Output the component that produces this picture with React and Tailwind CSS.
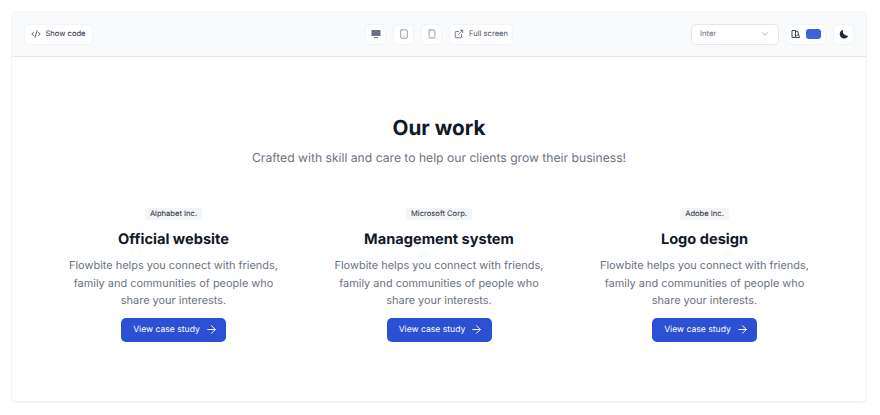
import React from "react";
import { ArrowRight, ChevronDown, CodeXml, ExternalLink, Smartphone, Tablet } from "lucide-react";

const projects = [
  { company: "Alphabet Inc.", title: "Official website" },
  { company: "Microsoft Corp.", title: "Management system" },
  { company: "Adobe Inc.", title: "Logo design" },
];

function IconButton({ children }) {
  return (
    <div className="flex h-[21px] w-[21px] items-center justify-center rounded-[5px] border border-gray-100 bg-white text-gray-500">
      {children}
    </div>
  );
}

function ProjectCard({ company, title }) {
  return (
    <div className="flex w-[235px] flex-col items-center text-center">
      <span className="rounded-[3px] bg-gray-100 px-[5px] py-[1px] text-[7.6px] leading-[10px] font-normal text-gray-800">
        {company}
      </span>
      <h3 className="mt-[9px] text-[14.6px] leading-[20px] font-bold text-[#111827]">{title}</h3>
      <p className="mt-[8px] w-[212px] text-[10.95px] leading-[17.5px] text-[#6b7280]">
        Flowbite helps you connect with friends, family and communities of people who share your interests.
      </p>
      <a className="mt-[8px] flex h-[24px] w-[105px] items-center justify-center gap-[5px] rounded-[5px] bg-[#2b50d4] pl-[4px] text-[8.6px] font-normal text-white">
        <span className="pt-[2px]">View case study</span>
        <ArrowRight size={13} strokeWidth={1.8} />
      </a>
    </div>
  );
}

export default function App() {
  return (
    <div className="h-[415px] bg-white pt-[11px] pl-[11px] font-['Inter',sans-serif] [text-rendering:geometricPrecision]">
      <div className="h-[391px] w-[856px] overflow-hidden rounded-[5px] border border-gray-100 shadow-[0_1px_1px_rgba(0,0,0,0.05)]">
        {/* Toolbar */}
        <div className="flex h-[45px] items-center justify-between border-b border-gray-200 bg-gray-50 px-[12px]">
          <div className="flex h-[21px] w-[69px] items-center justify-center gap-[4px] rounded-[5px] border border-gray-100 bg-white text-[7.6px] font-normal text-gray-800">
            <CodeXml size={10} strokeWidth={1.8} />
            Show code
          </div>

          <div className="ml-[94px] flex items-center gap-[7px]">
            <IconButton>
              <svg width="10" height="10" viewBox="0 0 10 10" fill="currentColor">
                <path d="M1 1h8a.5.5 0 0 1 .5.500v5a.5.5 0 0 1-.5.5H1a.5.5 0 0 1-.5-.5v-5A.5.5 0 0 1 1 1z" />
                <path d="M3 8h4v1H3z" />
              </svg>
            </IconButton>
            <IconButton><Tablet size={10} strokeWidth={1.6} /></IconButton>
            <IconButton><Smartphone size={10} strokeWidth={1.6} /></IconButton>
            <div className="flex h-[21px] w-[64px] items-center justify-center gap-[5px] rounded-[5px] border border-gray-100 bg-white text-[7.6px] font-normal text-gray-600">
              <ExternalLink size={10} strokeWidth={1.8} />
              Full screen
            </div>
          </div>

          <div className="flex items-center gap-[7px]">
            <div className="flex h-[21px] w-[88px] items-center justify-between rounded-[5px] border border-gray-200 bg-white px-[8px] text-[7.6px] text-gray-500">
              Inter
              <ChevronDown size={10} strokeWidth={1.4} />
            </div>
            <div className="flex h-[21px] w-[40px] items-center justify-center gap-[5px] rounded-[5px] border border-gray-100 bg-white text-gray-700">
              <svg width="10" height="10" viewBox="0 0 10 10" fill="none" stroke="currentColor" strokeWidth="1">
                <path d="M1 1.500h3.500v7H1z" />
                <path d="M4.500 2.500 6.500 2 8.500 8.500H4.500" />
                <path d="M5 7.500 7.500 5" />
              </svg>
              <span className="h-[10px] w-[15px] rounded-[3px] bg-[#3f62d8]" />
            </div>
            <IconButton>
              <svg width="10" height="10" viewBox="0 0 10 10" className="text-gray-800" fill="currentColor">
                <path d="M4.200 .8A4.400 4.400 0 1 0 9.300 6.600 4.300 4.300 0 0 1 4.200 .8z" />
              </svg>
            </IconButton>
          </div>
        </div>

        {/* Section */}
        <div className="flex flex-col items-center pt-[56px]">
          <h2 className="text-[20.7px] leading-[30px] font-bold text-[#111827]">Our work</h2>
          <p className="mt-[4px] text-[12.15px] leading-[21px] text-[#6b7280]">
            Crafted with skill and care to help our clients grow their business!
          </p>
          <div className="mt-[40px] flex gap-[30.5px]">
            {projects.map((p) => (
              <ProjectCard key={p.title} company={p.company} title={p.title} />
            ))}
          </div>
        </div>
      </div>
    </div>
  );
}
